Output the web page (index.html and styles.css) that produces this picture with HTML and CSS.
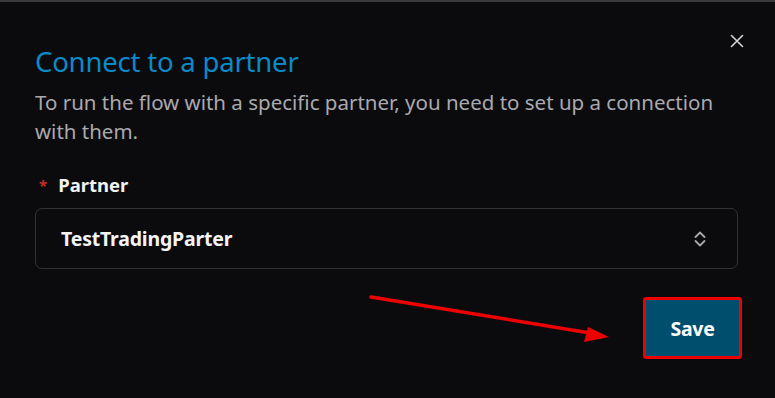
FILE: index.html
```html
<!DOCTYPE html>
<html lang="en">
<head>
<meta charset="utf-8">
<title>Connect to a partner</title>
<link rel="stylesheet" href="styles.css">
</head>
<body>
<div class="dialog">
  <button class="close" aria-label="Close">
    <svg width="14" height="14" viewBox="0 0 14 14"><path d="M1.5 1.5 L12.5 12.5 M12.5 1.5 L1.5 12.5" stroke="#d6d6d6" stroke-width="1.6" stroke-linecap="round" fill="none"/></svg>
  </button>
  <h2 class="title">Connect to a partner</h2>
  <p class="desc">To run the flow with a specific partner, you need to set up a connection with them.</p>
  <div class="label"><span class="req">*</span>Partner</div>
  <div class="select">
    <span class="value">TestTradingParter</span>
    <svg class="chev" width="14" height="20" viewBox="0 0 14 20"><path d="M2.5 8 L7 3.5 L11.5 8 M2.5 12 L7 16.5 L11.5 12" stroke="#a8a8a8" stroke-width="1.8" fill="none" stroke-linecap="round" stroke-linejoin="round"/></svg>
  </div>
  <div class="footer">
    <button class="save">Save</button>
  </div>
  <svg class="arrow" width="775" height="398" viewBox="0 0 775 398">
    <line x1="371" y1="297" x2="590" y2="333" stroke="#ee0000" stroke-width="3.5" stroke-linecap="round"/>
    <polygon points="609,337 584,342 588,327" fill="#ee0000"/>
  </svg>
</div>
</body>
</html>
```

FILE: styles.css
```css
html, body {
  margin: 0;
  padding: 0;
  background: #0b0b0e;
}
body {
  font-family: "Noto Sans", "Open Sans", sans-serif;
  color: #e8e8e8;
}
.dialog {
  position: relative;
  box-sizing: border-box;
  width: 775px;
  height: 398px;
  border-top: 2px solid #3a3a3c;
  padding: 44px 37px 0 35px;
  display: flex;
  flex-direction: column;
}
.close {
  position: absolute;
  top: 30px;
  right: 29px;
  width: 18px;
  height: 18px;
  padding: 0;
  border: 0;
  background: transparent;
  display: flex;
  align-items: center;
  justify-content: center;
}
.title {
  margin: 0;
  font-size: 27.5px;
  font-weight: 400;
  line-height: 32px;
  color: #0a8ac6;
  letter-spacing: -0.2px;
}
.desc {
  margin: 10px 0 0;
  max-width: 690px;
  font-size: 20.5px;
  line-height: 29px;
  color: #a9a9ae;
  letter-spacing: 0;
}
.label {
  margin-top: 27px;
  font-size: 18.5px;
  font-weight: 700;
  line-height: 24px;
  color: #f2f2f2;
  display: flex;
  align-items: center;
}
.req {
  color: #c42b2b;
  font-size: 15px;
  margin: 0 11px 0 4px;
}
.select {
  margin-top: 11px;
  height: 61px;
  box-sizing: border-box;
  border: 1px solid #323236;
  border-radius: 7px;
  display: flex;
  align-items: center;
  justify-content: space-between;
  padding: 0 30px 0 25px;
}
.value {
  font-size: 19.5px;
  font-weight: 700;
  color: #f4f4f4;
  letter-spacing: -0.2px;
}
.footer {
  display: flex;
  justify-content: flex-end;
  margin-top: 28px;
}
.save {
  width: 99px;
  height: 62px;
  margin-right: -4px;
  box-sizing: border-box;
  background: #004e6e;
  border: 3px solid #f00000;
  border-radius: 3px;
  color: #ffffff;
  font-family: "Noto Sans", "Open Sans", sans-serif;
  font-size: 19.5px;
  font-weight: 700;
  letter-spacing: -0.3px;
}
.arrow {
  position: absolute;
  left: 0;
  top: -2px;
  pointer-events: none;
}
```
